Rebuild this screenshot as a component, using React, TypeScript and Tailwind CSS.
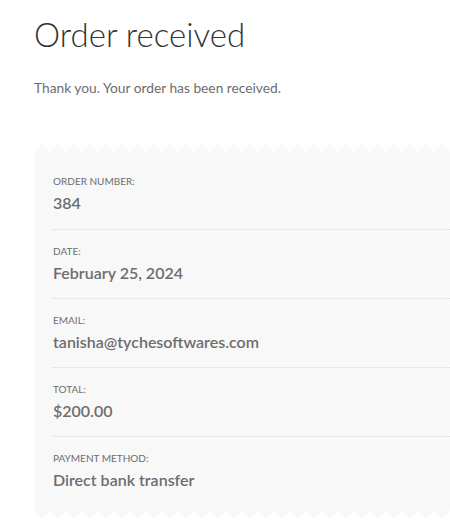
import { FC } from "react";

interface RowProps {
  label: string;
  value: string;
  first?: boolean;
}

const Row: FC<RowProps> = ({ label, value, first }) => (
  <li
    className={
      first
        ? "pt-[13px] pb-[14px]"
        : "pt-[13px] pb-[13px] border-t border-dotted border-[#d8d8d8]"
    }
  >
    <div className="text-[10px] leading-4 uppercase text-[#6d6d6d]">{label}</div>
    <div className="mt-[2px] text-[16px] leading-6 font-semibold text-[#6d6d6d]">
      {value}
    </div>
  </li>
);

const Zigzag: FC<{ flip?: boolean }> = ({ flip }) => (
  <svg className="block w-full h-[8px]" preserveAspectRatio="none">
    <defs>
      <pattern
        id={flip ? "zz-bottom" : "zz-top"}
        width="16"
        height="8"
        patternUnits="userSpaceOnUse"
      >
        <path
          d={flip ? "M0 0 L8 8 L16 0 Z" : "M0 8 L8 0 L16 8 Z"}
          fill="#f8f8f8"
        />
      </pattern>
    </defs>
    <rect width="100%" height="8" fill={`url(#${flip ? "zz-bottom" : "zz-top"})`} />
  </svg>
);

const details = [
  { label: "Order number:", value: "384" },
  { label: "Date:", value: "February 25, 2024" },
  { label: "Email:", value: "tanisha@tychesoftwares.com" },
  { label: "Total:", value: "$200.00" },
  { label: "Payment method:", value: "Direct bank transfer" },
];

export default function App() {
  return (
    <div className="w-[450px] h-[522px] overflow-hidden bg-white font-['Lato','Noto_Sans',sans-serif]">
      <div className="pl-[34px] pt-[12px]">
        <h1 className="text-[33px] leading-[44px] font-light text-[#333333]">
          Order received
        </h1>
        <p className="mt-[20px] text-[13.75px] leading-6 text-[#6d6d6d]">
          Thank you. Your order has been received.
        </p>
        <div className="mt-[44px]">
          <Zigzag />
          <ul className="bg-[#f8f8f8] pl-[19px] pt-[7px] pb-[5px] border-t border-b border-[#fbfbfb]">
            {details.map((d, i) => (
              <Row key={d.label} label={d.label} value={d.value} first={i === 0} />
            ))}
          </ul>
          <Zigzag flip />
        </div>
      </div>
    </div>
  );
}
